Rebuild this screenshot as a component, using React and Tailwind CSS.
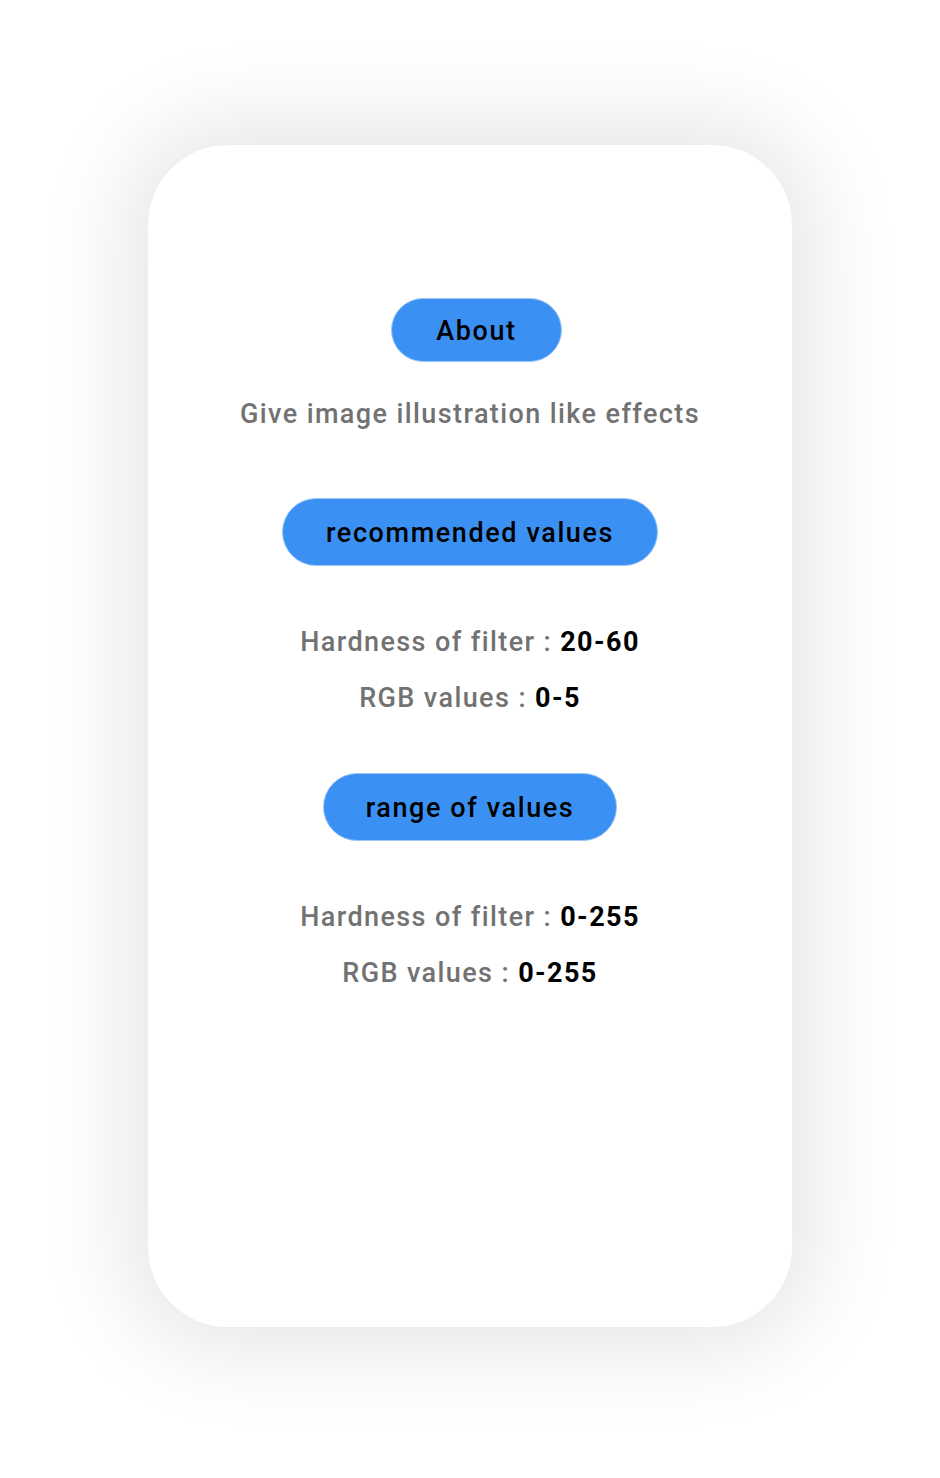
import React from "react";

const font = { fontFamily: "Roboto, 'Noto Sans', sans-serif" };

const Pill = ({ children, className }) => (
  <div
    className={`flex items-center justify-center rounded-full bg-[#3b91f3] border border-[#9cc6f7] text-black font-medium text-[27px] leading-[32px] pt-[2px] tracking-[1.6px] ${className}`}
  >
    {children}
  </div>
);

const Row = ({ label, value, className }) => (
  <div className={`text-[27px] leading-[32px] pt-[2px] font-medium text-[#727272] tracking-[1.4px] ${className}`}>
    {label} : <span className="font-bold text-black">{value}</span>
  </div>
);

const App = () => {
  return (
    <div className="w-full min-h-[1478px] bg-white flex justify-center pt-[145px]" style={font}>
      <div className="w-[644px] h-[1182px] bg-white rounded-[80px] shadow-[0_0_90px_22px_rgba(0,0,0,0.1)] flex flex-col items-center pt-[153px]">
        <Pill className="w-[171px] h-[64px] ml-[13px]">About</Pill>
        <div className="mt-[34px] pt-[2px] text-[27px] leading-[32px] font-medium text-[#727272] tracking-[1.4px]">
          Give image illustration like effects
        </div>
        <Pill className="mt-[68px] w-[376px] h-[68px]">recommended values</Pill>
        <Row className="mt-[58px]" label="Hardness of filter" value="20-60" />
        <Row className="mt-[22px]" label="RGB values" value="0-5" />
        <Pill className="mt-[59px] w-[294px] h-[68px]">range of values</Pill>
        <Row className="mt-[58px]" label="Hardness of filter" value="0-255" />
        <Row className="mt-[22px]" label="RGB values" value="0-255" />
      </div>
    </div>
  );
};

export default App;
